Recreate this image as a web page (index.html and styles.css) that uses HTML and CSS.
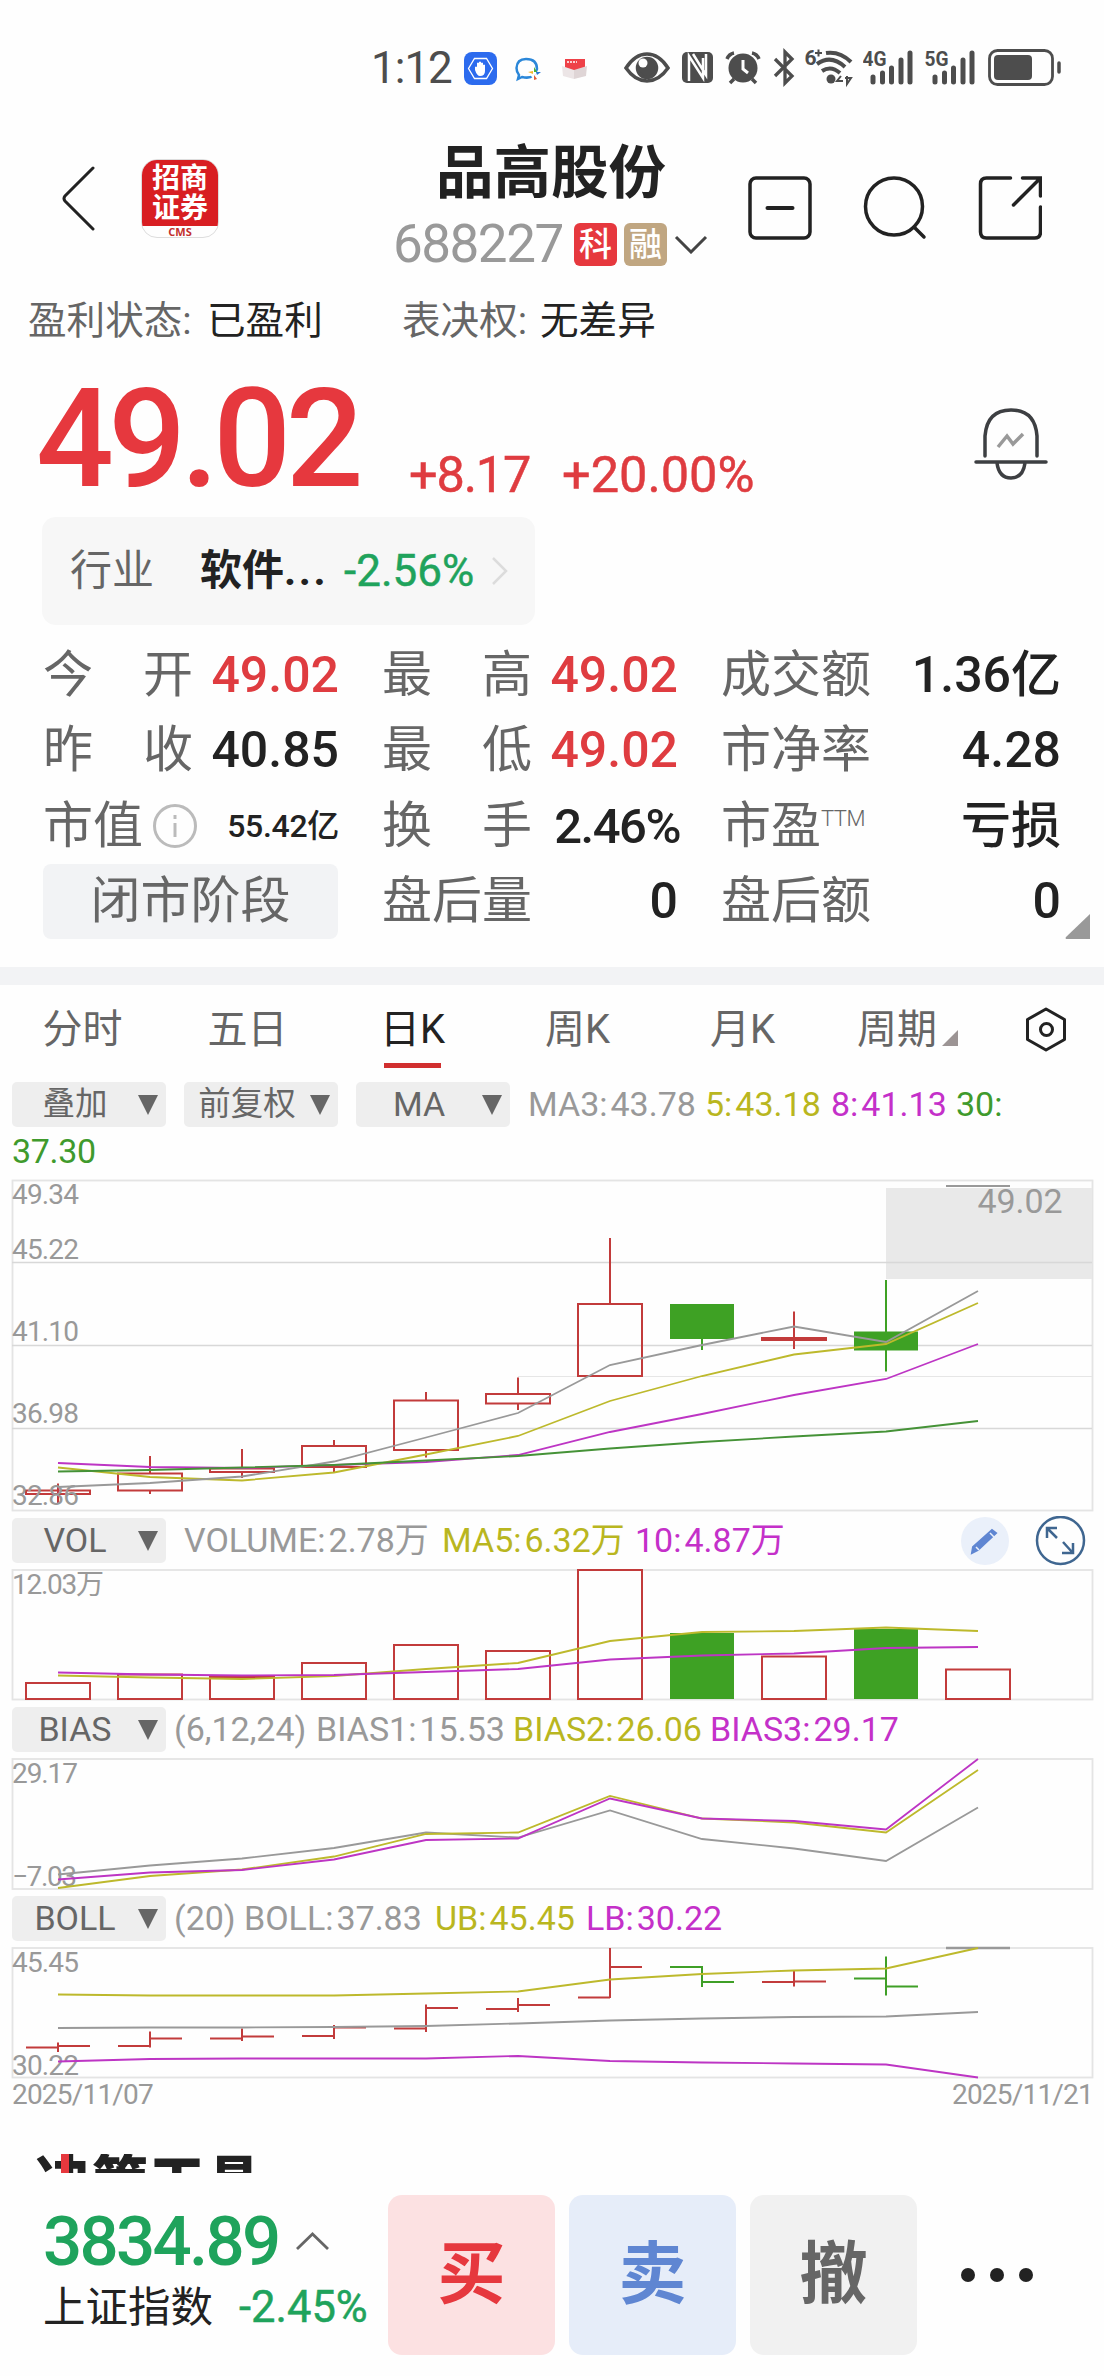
FILE: index.html
```html
<!DOCTYPE html>
<html lang="zh-CN">
<head>
<meta charset="utf-8">
<title>品高股份 688227</title>
<link rel="stylesheet" href="styles.css">
</head>
<body>
<div class="status">
  <span class="clock">1:12</span>
  <svg class="s-app" width="33" height="40" viewBox="464 48 33 40"><rect x="464" y="52" width="33" height="33" rx="8" fill="#2c6bee"/><path d="M474.500 58.500h12l6 10-6 10h-12l-6-10z" fill="none" stroke="#fff" stroke-width="1.300"/><path d="M475 70v-3q1-1 2 0v-4q1-1 2 0v-1q1-1 2 0v1q1-1 2 0v2q1-1 2 0v6q0 5-5 5-3 0-5-6z" fill="#fff"/></svg>
  <svg class="s-chat" width="26" height="40" viewBox="515 48 26 40"><path d="M519 75l-1 4 4-2q12 3 15-8 0-10-11-10-9 0-9.500 9 0 4 2.500 7z" fill="none" stroke="#2b87d9" stroke-width="2.500"/><path d="M533 68l4 5-4 5-5-5z" fill="#fff"/><path d="M534 67v5h3z" fill="#4bb034"/><path d="M528 72l5-1v3z" fill="#f5b62b"/><path d="M536 72h5l-4 3z" fill="#2878d8"/><path d="M534 75l3 4-3 1z" fill="#e35b39"/></svg>
  <svg class="s-box" width="26" height="40" viewBox="562 48 26 40"><path d="M565 59h20v11h-20z" fill="#ee4148"/><path d="M567 62h10" stroke="#fff" stroke-width="1.500" stroke-dasharray="2 1"/><path d="M562 66l12 4v9l-11-3z" fill="#ece5e6"/><path d="M587 66l-13 4v9l12-3z" fill="#dfd5d6"/></svg>
  <svg class="s-eye" width="46" height="40" viewBox="624 48 46 40" fill="none" stroke="#4d4d4d" stroke-width="3.500"><path d="M626 68q9-14 21-14t21 14q-9 13-21 13t-21-13z"/><circle cx="647" cy="68" r="9.500" fill="#4d4d4d"/><circle cx="643" cy="63" r="4.500" fill="#fefefe" stroke="none"/></svg>
  <svg class="s-nfc" width="31" height="40" viewBox="682 48 31 40"><rect x="682" y="52" width="31" height="31" rx="5" fill="#4d4d4d"/><path d="M689 81V56l14 22V58M693 54l13 21V54" fill="none" stroke="#fefefe" stroke-width="2.500"/></svg>
  <svg class="s-alarm" width="36" height="40" viewBox="725 48 36 40"><circle cx="743" cy="68" r="14.500" fill="#4d4d4d"/><path d="M727 59q2-5 7-6M759 59q-2-5-7-6M734 79l-4 4M752 79l4 4" stroke="#4d4d4d" stroke-width="3.500" fill="none"/><path d="M743 60v9l5 4" stroke="#fefefe" stroke-width="3" fill="none"/></svg>
  <svg class="s-bt" width="22" height="40" viewBox="773 48 22 40"><path d="M775 59l17 17-7 7V52l7 7-17 17" fill="none" stroke="#4d4d4d" stroke-width="3.300"/></svg>
  <svg class="s-wifi" width="49" height="40" viewBox="805 48 49 40"><text x="804.500" y="65" class="net">6</text><path d="M815 53h7M818.500 49.500v7" stroke="#4d4d4d" stroke-width="2"/><g fill="none" stroke="#4d4d4d" stroke-width="4"><path d="M826 53q14-2 25 9"/><path d="M817 64q14-10 28 3"/><path d="M822 71q9-6 18 2"/></g><circle cx="831" cy="79" r="4.500" fill="#4d4d4d"/><path d="M841 76l-4 5h6M847 76v8l4-6h-6" stroke="#4d4d4d" stroke-width="2" fill="none"/></svg>
  <svg class="s-sig" width="51" height="40" viewBox="863 48 51 40"><text x="862.500" y="66" class="net" textLength="24" lengthAdjust="spacingAndGlyphs">4G</text><path d="M873 77v5M882.500 73v9M891.500 68v14M901 60v22M910 53v29" stroke="#4d4d4d" stroke-width="5" stroke-linecap="round"/></svg>
  <svg class="s-sig" width="51" height="40" viewBox="863 48 51 40"><text x="862.500" y="66" class="net" textLength="24" lengthAdjust="spacingAndGlyphs">5G</text><path d="M873 77v5M882.500 73v9M891.500 68v14M901 60v22M910 53v29" stroke="#4d4d4d" stroke-width="5" stroke-linecap="round"/></svg>
  <svg class="s-bat" width="74" height="40" viewBox="987 48 74 40"><rect x="988.500" y="50.500" width="63" height="34" rx="8" fill="none" stroke="#4d4d4d" stroke-width="2.800"/><rect x="993" y="55" width="38" height="25" rx="4" fill="#4d4d4d"/><path d="M1058 63v9" stroke="#4d4d4d" stroke-width="3.500" stroke-linecap="round"/></svg>
</div>

<header class="header">
  <svg class="back" width="34" height="66" viewBox="61 165 34 66"><path d="M93 168L65 196q-2 2.500 0 5L93 229" fill="none" stroke="#222" stroke-width="3" stroke-linecap="round"/></svg>
  <div class="logo"><div class="logo-zh"><span>招商</span><span>证券</span></div><div class="logo-en">CMS</div></div>
  <div class="name">
    <h1>品高股份</h1>
    <div class="code-line"><span class="code">688227</span><span class="badge red">科</span><span class="badge gold">融</span>
    <svg width="34" height="20" viewBox="675 232 34 20"><path d="M677 235l15 15 15-15" fill="none" stroke="#444" stroke-width="3"/></svg></div>
  </div>
  <div class="tools">
    <svg width="64" height="64" viewBox="748.500 175.500 64 64"><rect x="750.500" y="177.500" width="60" height="60" rx="6" fill="none" stroke="#222" stroke-width="3.500"/><path d="M768 207.500h25" stroke="#222" stroke-width="4" stroke-linecap="round"/></svg>
    <svg width="64" height="64" viewBox="863 175 64 64"><circle cx="894" cy="205.500" r="28.500" fill="none" stroke="#222" stroke-width="3.500"/><path d="M914 226l10 10" stroke="#222" stroke-width="3.500" stroke-linecap="round"/></svg>
    <svg width="64" height="64" viewBox="978.500 175.500 64 64"><path d="M1011 177.500h-24q-6 0-6 6v48q0 6 6 6h48q6 0 6-6v-25M1023 177.500h18v18M1041 177.500l-27 27" fill="none" stroke="#222" stroke-width="3.500" stroke-linecap="round"/></svg>
  </div>
</header>

<div class="facts"><span class="f-label">盈利状态:</span><span class="f-val v1">已盈利</span><span class="f-label">表决权:</span><span class="f-val">无差异</span></div>

<section class="quote">
  <span class="price">49.02</span><span class="chg c1">+8.17</span><span class="chg">+20.00%</span>
  <svg class="bell" width="74" height="76" viewBox="974 406 74 76" fill="none" stroke="#3d3f42" stroke-width="3.500"><path d="M985 456v-20q2-26 26-26t26 26v20M976 462h70" stroke-linecap="round"/><path d="M997 463q2 15 14 15t14-15"/><path d="M998 447l9-11 6 8 10-10" stroke="#999"/></svg>
</section>

<section class="industry"><span class="i-label">行业</span><b>软件<span class="ell">...</span></b><span class="i-chg">-2.56%</span>
<svg width="17" height="32" viewBox="490 554 17 32"><path d="M492 557l13 13-13 13" fill="none" stroke="#dcdcdc" stroke-width="2.500"/></svg></section>

<section class="stats">
  <div class="cell"><span class="lab"><i>今</i><i>开</i></span><span class="val up">49.02</span></div>
  <div class="cell"><span class="lab"><i>最</i><i>高</i></span><span class="val up">49.02</span></div>
  <div class="cell"><span class="lab">成交额</span><span class="val">1.36亿</span></div>
  <div class="cell"><span class="lab"><i>昨</i><i>收</i></span><span class="val">40.85</span></div>
  <div class="cell"><span class="lab"><i>最</i><i>低</i></span><span class="val up">49.02</span></div>
  <div class="cell"><span class="lab">市净率</span><span class="val">4.28</span></div>
  <div class="cell"><span class="lab cap">市值<svg width="46" height="46" viewBox="0 0 46 46"><circle cx="23" cy="23" r="20.500" fill="none" stroke="#bbb" stroke-width="3"/><path d="M23 20v14M23 12v4" stroke="#bbb" stroke-width="3"/></svg></span><span class="val small">55.42亿</span></div>
  <div class="cell"><span class="lab"><i>换</i><i>手</i></span><span class="val pct">2.46%</span></div>
  <div class="cell"><span class="lab ttm">市盈<small>TTM</small></span><span class="val">亏损</span></div>
  <div class="cell phase">闭市阶段</div>
  <div class="cell"><span class="lab">盘后量</span><span class="val">0</span></div>
  <div class="cell"><span class="lab">盘后额</span><span class="val">0</span></div>
  <svg class="corner" width="25" height="25" viewBox="0 0 25 25"><path d="M25 0v25H1q-1-1 0-2z" fill="#999"/></svg>
</section>
<div class="divider"></div>

<nav class="tabs">
  <span>分时</span><span>五日</span><span class="on">日K</span><span>周K</span><span>月K</span><span class="more">周期<svg width="17" height="17" viewBox="0 0 17 17"><path d="M16 0v16H0z" fill="#9c9494"/></svg></span>
  <svg class="hex" width="44" height="46" viewBox="1024 1006 44 46" fill="none" stroke="#222" stroke-width="3"><path d="M1046 1009l18.500 10.500v20l-18.500 10.500-18.500-10.500v-20z" stroke-linejoin="round"/><circle cx="1046.500" cy="1029.500" r="6"/></svg>
</nav>

<div class="ind first"><span class="pick p-zh"><em>叠加</em><svg width="20" height="20" viewBox="0 0 20 20"><path d="M0 0h20L10 20z" fill="#666"/></svg></span><span class="pick p-zh"><em>前复权</em><svg width="20" height="20" viewBox="0 0 20 20"><path d="M0 0h20L10 20z" fill="#666"/></svg></span><span class="pick"><em>MA</em><svg width="20" height="20" viewBox="0 0 20 20"><path d="M0 0h20L10 20z" fill="#666"/></svg></span>
<p><span class="g w177">MA3:<s></s>43.78</span><span class="y w126">5:<s></s>43.18</span><span class="m w125">8:<s></s>41.13</span><span class="n">30:</span></p></div>
<div class="ma-wrap n">37.30</div>

<svg class="chart k" width="1104" height="334" viewBox="0 1179 1104 334">
  <rect x="12.500" y="1180.500" width="1080" height="330" class="frame"/>
  <rect x="886" y="1188" width="206" height="91" fill="#e9e9e9"/>
  <path d="M12 1262.500h1080M12 1345.500h1080M12 1428.500h1080" stroke="#d8d8d8" stroke-width="1.500"/><path d="M518 1376.500h574" stroke="#e6e6e6" stroke-width="1.200"/>
  <g class="rise"><path d="M58 1483.500V1503M150 1456v17M150 1491v3M242 1449v19M242 1472v6M334 1440v6M334 1467v6M426 1392v8M426 1450v7.500M518 1377.500v16M518 1403.500v6.500M610 1238v66M794 1311.500v37.500"/>
  <path d="M26 1490.500h64v3.500H26zM118 1473.500h64v17h-64zM210 1468.500h64v3.500h-64zM302 1446h64v21h-64zM394 1400.500h64v49.500h-64zM486 1394h64v9.500h-64zM578 1304h64v72h-64zM762 1338h64v2h-64z"/></g>
  <g class="fall"><path d="M670 1304h64v35h-64zM701 1338h2v12h-2zM854 1331.500h64v19h-64zM885 1280h2v91.500h-2z"/></g>
  <path d="M946 1186h64" stroke="#999" stroke-width="2"/>
  <polyline class="lm" points="58,1463 150,1467 242,1468 334,1465 426,1462 518,1455 610,1432 702,1414 794,1395 886,1379 978,1344"/>
  <polyline class="ly" points="58,1467.500 150,1477 242,1480.500 334,1472.500 426,1454.500 518,1436 610,1401 702,1376 794,1354.500 886,1344 978,1303"/>
  <polyline class="lg" points="58,1487 150,1483 242,1476.500 334,1461.500 426,1437.500 518,1413 610,1365 702,1345 794,1326.500 886,1342 978,1291"/>
  <polyline class="ln" points="58,1471.500 150,1470 242,1467.500 334,1465 426,1460.500 518,1456 610,1448.500 702,1442 794,1436.500 886,1431.500 978,1421"/>
  <g class="axis"><text x="12" y="1204" textLength="67">49.34</text><text x="12" y="1259" textLength="67">45.22</text><text x="12" y="1341" textLength="67">41.10</text><text x="12" y="1423" textLength="67">36.98</text><text x="12" y="1505" textLength="67">32.86</text><text x="977.500" y="1213" class="tag" textLength="85">49.02</text></g>
</svg>

<div class="ind"><span class="pick"><em>VOL</em><svg width="20" height="20" viewBox="0 0 20 20"><path d="M0 0h20L10 20z" fill="#666"/></svg></span>
<p class="p2"><span class="g w258">VOLUME:<s></s>2.78万</span><span class="y w193">MA5:<s></s>6.32万</span><span class="m">10:<s></s>4.87万</span></p>
<svg class="edit" width="130" height="50" viewBox="959 1516 130 50"><circle cx="985" cy="1541" r="24" fill="#eaf0fa"/><path d="M992 1530l4 3-18 17-6 3 1-6z" fill="#5f86d2" stroke="#5f86d2" stroke-width="2"/><path d="M990 1533l4 4M976 1547l3 3" stroke="#eaf0fa" stroke-width="1.500"/><circle cx="1060.500" cy="1540.500" r="23.500" fill="none" stroke="#3f6690" stroke-width="2.500"/><path d="M1047 1538v-10h10M1048 1529l9 9M1073 1543v10h-11M1072 1552l-9-10" fill="none" stroke="#3f6690" stroke-width="2.500"/></svg></div>

<svg class="chart v" width="1104" height="134" viewBox="0 1568 1104 134">
  <rect x="12.500" y="1570" width="1080" height="129.500" class="frame"/>
  <g class="axis"><text x="12" y="1594" textLength="92">12.03万</text></g>
  <path class="rise" d="M26 1683h64v16H26zM118 1674.500h64v24.500h-64zM210 1677h64v22h-64zM302 1663h64v36h-64zM394 1645h64v54h-64zM486 1651h64v48h-64zM578 1570h64v129h-64zM762 1656.500h64v42.500h-64zM946 1669.500h64v29.500h-64z"/>
  <path class="fall" d="M670 1633h64v66h-64zM854 1629h64v70h-64z"/>
  <polyline class="ly" points="58,1675.500 150,1677.500 242,1679 334,1676 426,1669 518,1663 610,1641 702,1632 794,1631 886,1627.500 978,1631"/>
  <polyline class="lm" points="58,1672.500 150,1674.500 242,1675.500 334,1675 426,1672 518,1669 610,1659.500 702,1655.500 794,1653.500 886,1648 978,1647"/>
</svg>

<div class="ind"><span class="pick"><em>BIAS</em><svg width="20" height="20" viewBox="0 0 20 20"><path d="M0 0h20L10 20z" fill="#666"/></svg></span>
<p class="p3"><span class="g w142">(6,12,24)</span><span class="g w197">BIAS1:<s></s>15.53</span><span class="y w197">BIAS2:<s></s>26.06</span><span class="m">BIAS3:<s></s>29.17</span></p></div>

<svg class="chart b" width="1104" height="133" viewBox="0 1758 1104 133">
  <rect x="12.500" y="1759" width="1080" height="130" class="frame"/>
  <g class="axis"><text x="12" y="1783" textLength="66">29.17</text><text x="12" y="1886" textLength="65">−7.03</text></g>
  <polyline class="lg" points="58,1874.500 150,1865.500 242,1858.500 334,1848 426,1832.500 518,1837.500 610,1810.500 702,1839 794,1848.500 886,1861 978,1807.500"/>
  <polyline class="ly" points="58,1888 150,1876 242,1869.500 334,1856.500 426,1834 518,1832.500 610,1796 702,1818.500 794,1822.500 886,1832.500 978,1770"/>
  <polyline class="lm" points="58,1879.500 150,1872.500 242,1870 334,1859.500 426,1840 518,1838.500 610,1798.500 702,1818.500 794,1821 886,1829.500 978,1759"/>
</svg>

<div class="ind"><span class="pick"><em>BOLL</em><svg width="20" height="20" viewBox="0 0 20 20"><path d="M0 0h20L10 20z" fill="#666"/></svg></span>
<p class="p3"><span class="g w70">(20)</span><span class="g w191">BOLL:<s></s>37.83</span><span class="y w151">UB:<s></s>45.45</span><span class="m">LB:<s></s>30.22</span></p></div>

<svg class="chart boll" width="1104" height="133" viewBox="0 1946 1104 133">
  <rect x="12.500" y="1948" width="1080" height="129.500" class="frame"/>
  <g class="axis"><text x="12" y="1972" textLength="67">45.45</text><text x="12" y="2075" textLength="67">30.22</text></g>
  <g class="rise"><path d="M26 2047.500h32M58 2046h32M58 2042.500v9.500M118 2046h32M150 2038.500h32M150 2031.500v16M210 2038.500h32M242 2036.500h32M242 2028.500v12.500M302 2036h32M334 2027.500h32M334 2025v14M394 2028.500h32M426 2008h32M426 2004.500V2032M486 2009h32M518 2005h32M518 1998v14M578 1997.500h32M610 1967h32M610 1948v50M762 1982h32M794 1981.500h32M794 1970.500v16"/></g>
  <path d="M670 1967h32M702 1982h32M702 1966v21M854 1978.500h32M886 1986.500h32M886 1956.500v39" stroke="#3f9f27" stroke-width="2"/>
  <path d="M946 1948h64" stroke="#999" stroke-width="2.500"/>
  <polyline class="lg" points="58,2028 150,2027.500 242,2027.500 334,2027 426,2026 518,2023.500 610,2020.500 702,2018.500 794,2017 886,2016.500 978,2012"/>
  <polyline class="ly" points="58,1994.500 150,1995.500 242,1995.500 334,1995.500 426,1993.500 518,1991.500 610,1979.500 702,1974 794,1970.500 886,1968.500 978,1948"/>
  <polyline class="lm" points="58,2061.500 150,2059 242,2058.500 334,2058.500 426,2058.500 518,2056 610,2061 702,2062.500 794,2063.500 886,2064.500 978,2077.500"/>
</svg>
<div class="dates"><span>2025/11/07</span><span>2025/11/21</span></div>

<div class="next"><span>决策工具</span><i class="accent"></i></div>

<footer class="bar">
  <div class="index">
    <div class="pt"><span>3834.89</span><svg width="36" height="20" viewBox="294 2232 36 20"><path d="M297 2250l15.500-15 15.500 15" fill="none" stroke="#666" stroke-width="2.800"/></svg></div>
    <div class="nm"><span>上证指数</span><em>-2.45%</em></div>
  </div>
  <button class="buy">买</button><button class="sell">卖</button><button class="undo">撤</button>
  <svg class="dots" width="76" height="20" viewBox="958 2265 76 20" fill="#222"><circle cx="967" cy="2275" r="7"/><circle cx="996" cy="2275" r="7"/><circle cx="1025" cy="2275" r="7"/></svg>
</footer>
</body>
</html>
```
FILE: styles.css
```css
* { box-sizing: border-box; }
body { margin: 0; width: 1104px; background: #fefefe; color: #222; font-family: Roboto, "Noto Sans CJK SC", sans-serif; }
svg { display: block; flex: none; }
i, em { font-style: normal; }
s { text-decoration: none; display: inline-block; width: 3px; }

.status { height: 100px; padding: 48px 0 0 371px; display: flex; align-items: flex-start; }
.clock { width: 93px; font-size: 44px; line-height: 40px; letter-spacing: -1px; color: #4d4d4d; }
.net { font-size: 21px; font-weight: 700; fill: #4d4d4d; }
.s-chat { margin-left: 18px; }
.s-box { margin-left: 21px; }
.s-eye { margin-left: 36px; }
.s-nfc { margin-left: 12px; }
.s-alarm { margin-left: 12px; }
.s-bt { margin-left: 12px; }
.s-wifi { margin-left: 10px; }
.s-sig { margin-left: 9px; margin-right: 2px; }
.s-bat { margin-left: 10px; }

.header { height: 180px; display: flex; align-items: flex-start; padding-left: 61px; }
.back { margin-top: 65px; }
.logo { margin: 59px 0 0 46px; width: 78px; height: 79px; border-radius: 16px; overflow: hidden; background: #fefefe; border: 1px solid #ddd; }
.logo-zh { height: 66px; padding-top: 4px; background: #d81e22; color: #fff; font-size: 28px; font-weight: 700; line-height: 30px; text-align: center; display: flex; flex-direction: column; }
.logo-en { text-align: center; font: 700 11px/12px "Open Sans", sans-serif; color: #c3302c; }
.name { margin-left: 174px; width: 318px; }
.name h1 { margin: 39px 0 0 43px; font-size: 57.500px; line-height: 70px; font-weight: 700; }
.code-line { display: flex; align-items: center; height: 50px; margin-top: 10px; }
.code { width: 181px; font-size: 53px; line-height: 50px; letter-spacing: -1.500px; color: #999; }
.badge { width: 43px; height: 43px; margin-right: 7px; border-radius: 6px; font-size: 33px; line-height: 43px; text-align: center; color: #fff; font-weight: 500; }
.badge.red { background: #e6383e; }
.badge.gold { background: #c0a681; }
.tools { display: flex; gap: 51px; margin: 76px 0 0 37px; }

.facts { height: 82px; padding-left: 28px; display: flex; align-items: center; font-size: 38.600px; line-height: 82px; white-space: nowrap; }
.f-label { color: #666; margin-right: 12px; width: 167px; }
.f-label + .f-val + .f-label { width: 126px; }
.f-val.v1 { width: 195px; }

.quote { height: 155px; display: flex; align-items: flex-start; color: #e6383e; padding-left: 36px; }
.price { width: 373px; font-size: 137px; line-height: 160px; letter-spacing: -5.500px; font-weight: 500; margin-top: -3px; }
.chg { font-size: 50.500px; line-height: 60px; margin-top: 83px; color: #df3c40; -webkit-text-stroke: .5px; }
.chg.c1 { width: 153px; letter-spacing: -1.200px; }
.bell { margin: 44px 0 0 220px; }

.industry { margin-left: 42px; width: 493px; height: 108px; border-radius: 14px; background: #f7f7f7; padding-left: 28px; display: flex; align-items: center; font-size: 42px; line-height: 60px; }
.i-label { width: 130px; color: #666; }
.industry b { width: 144px; font-weight: 700; }
.ell { letter-spacing: 2.500px; }
.i-chg { width: 147px; font-size: 44px; color: #1fa35c; -webkit-text-stroke: .5px; }

.stats { position: relative; display: grid; grid-template-columns: 295px 295px 339px; column-gap: 44px; grid-auto-rows: 75.300px; padding: 13px 0 0 43px; height: 342px; font-size: 50px; }
.cell { display: flex; justify-content: space-between; line-height: 75px; white-space: nowrap; }
.lab { display: flex; justify-content: space-between; width: 150px; color: #666; }
.val { font-weight: 500; font-size: 50px; margin-right: -1px; }
.up { color: #df3c40; }
.lab.cap { align-items: center; justify-content: flex-start; gap: 9px; }
.val.pct { letter-spacing: -1.500px; margin-right: -3px; font-size: 49px; }
.val.small { font-size: 32px; letter-spacing: -.300px; }
.lab.ttm { justify-content: flex-start; }
.ttm small { font: 300 22px/60px Roboto, sans-serif; letter-spacing: -.500px; }
.phase { justify-content: center; background: #f2f3f5; border-radius: 8px; color: #666; }
.corner { position: absolute; right: 14px; bottom: 28px; }
.divider { height: 18px; background: #f2f3f5; }

.tabs { height: 95px; display: grid; grid-template-columns: 165px 165px 165px 165px 165px 166px 44px; align-items: start; font-size: 40px; line-height: 86px; color: #666; text-align: center; margin-top: 2px; }
.tabs span { position: relative; height: 86px; }
.tabs .on { color: #222; }
.tabs .on::after { content: ""; position: absolute; left: 54px; bottom: 5px; width: 57px; height: 5px; background: #d12f2f; }
.tabs .more { display: flex; justify-content: center; }
.more svg { margin: 43px 0 0 5px; }
.hex { margin: 19px 0 0 33px; }

.ind { height: 45px; padding-left: 12px; display: flex; align-items: center; font-size: 34px; line-height: 45px; }
.pick { width: 154px; height: 45px; border-radius: 5px; background: #eee; display: flex; align-items: center; justify-content: space-between; padding-right: 8px; color: #666; flex: none; }
.pick em { flex: 1; text-align: center; }
.pick.p-zh em { font-size: 32.500px; }
.first .pick { margin-right: 18px; }
.ind p { margin: 0; display: flex; white-space: nowrap; }
.p2 { padding-left: 18px; }
.p3 { padding-left: 8px; }
.g { color: #999; } .y { color: #b9b61f; } .m { color: #c430c9; } .n { color: #3f9a2c; }
.w177 { width: 177px; } .w126 { width: 126px; } .w125 { width: 125px; }
.w258 { width: 258px; } .w193 { width: 193px; } .w142 { width: 142px; } .w197 { width: 197px; }
.w70 { width: 70px; } .w191 { width: 191px; } .w151 { width: 151px; }
.ma-wrap { height: 52px; padding-left: 12px; font-size: 34px; line-height: 49px; letter-spacing: -.300px; }
.edit { margin: 0 15px 0 auto; }

.frame { fill: none; stroke: #e4e4e4; stroke-width: 1.800; }
.rise { fill: none; stroke: #c23b3b; stroke-width: 2; }
.fall { fill: #3ea124; }
.chart polyline { fill: none; stroke-width: 1.800; }
.lg { stroke: #999; } .ly { stroke: #bdb92c; } .lm { stroke: #bd35c4; } .ln { stroke: #459237; }
.axis { font-size: 28px; fill: #999; }
.tag { font-size: 34px; }
.k { margin-bottom: 5px; }
.v { margin: 5px 0; }
.b { margin: 6px 0 5px; }
.boll { margin: 5px 0 0; }
.dates { height: 46px; margin-top: -7px; padding: 0 11px 0 12px; display: flex; justify-content: space-between; color: #999; font-size: 28px; line-height: 46px; letter-spacing: -.800px; }

.next { position: relative; margin-top: 36px; height: 19px; overflow: hidden; padding-left: 35px; font-weight: 900; font-size: 56px; line-height: 56px; letter-spacing: 1px; }
.next span { display: block; }
.accent { position: absolute; left: 61px; top: 0; width: 8px; height: 19px; background: #e6383e; }

.bar { display: flex; margin-top: 22px; padding-left: 43px; height: 181px; }
.index { width: 345px; }
.pt { display: flex; align-items: center; height: 92px; font-size: 69px; font-weight: 500; letter-spacing: -2.700px; color: #1fa35c; }
.pt span { width: 251px; }
.nm { font-size: 42.500px; line-height: 46px; margin-top: -2px; display: flex; }
.nm span { width: 196px; }
.nm em { font-size: 43.500px; color: #1fa35c; -webkit-text-stroke: .5px; }
.bar button { width: 167px; height: 160px; padding: 0; margin-right: 14px; border: 0; border-radius: 14px; font: 700 68px/160px Roboto, "Noto Sans CJK SC", sans-serif; }
.buy { background: #fce1e2; color: #e6383e; }
.sell { background: #e6edf9; color: #5f86d2; }
.undo { background: #f1f1f1; color: #666; }
.dots { margin: 70px 0 0 28px; }
```
